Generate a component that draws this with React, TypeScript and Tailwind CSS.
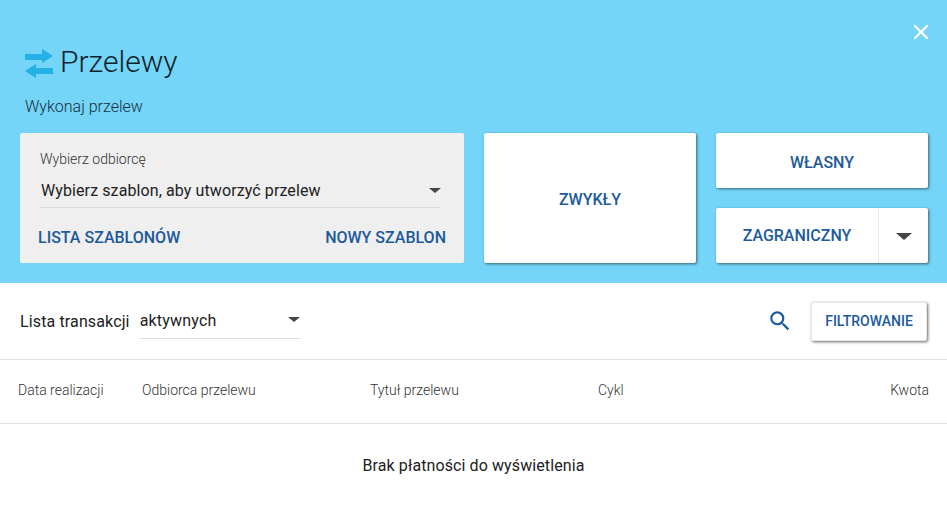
import { X } from "lucide-react";

function Caret({ className }: { className: string }) {
  return <span className={`border-x-transparent border-t-[#444] ${className}`} />;
}

function ActionButton({ label, className }: { label: string; className: string }) {
  return (
    <button
      type="button"
      className={`flex items-center justify-center rounded-[2px] bg-white text-base font-medium text-[#1c5a9c] shadow-[1px_1px_3px_rgba(0,0,0,0.55)] ${className}`}
    >
      {label}
    </button>
  );
}

export default function App() {
  return (
    <div className="h-[506px] w-[947px] overflow-hidden bg-white font-['Roboto',sans-serif] text-[#212121]">
      <header className="relative h-[283px] bg-[#74d5f8] pt-[133px] pr-[19px] pl-5">
        <button type="button" className="absolute top-[20px] right-[14px] text-white">
          <X className="h-6 w-6" strokeWidth={2.2} />
        </button>

        <div className="absolute top-[41px] left-[25px]">
          <div className="flex h-[42px] items-center gap-[7px]">
            <svg width="28" height="30" viewBox="0 0 28 30" className="mt-[3px] text-[#23b1e6]" fill="currentColor">
              <path d="M0 5h17V0l11 7-11 7v-3H0z" />
              <path d="M28 19H11v-4L0 22l11 7v-4h17z" />
            </svg>
            <h1 className="text-[30px] leading-none font-light text-[#10222c]">Przelewy</h1>
          </div>
          <p className="mt-[14px] text-base leading-5 font-light text-[#14303d]">Wykonaj przelew</p>
        </div>

        <div className="flex gap-5">
          <section className="flex h-[130px] w-[444px] flex-col rounded-[2px] bg-[#efefef] px-[18px] pt-[17px]">
            <div className="pr-[6px] pl-[2px]">
              <label className="block text-sm leading-[18px] font-light text-[#333]">Wybierz odbiorcę</label>
              <div className="mt-[4px] flex h-[36px] items-center justify-between border-b border-[#dcdcdc] pt-[3px]">
                <span className="pl-px text-base tracking-[0.1px] text-[#212121]">
                  Wybierz szablon, aby utworzyć przelew
                </span>
                <Caret className="mr-[-1px] mb-[2px] border-x-[6px] border-t-[5px]" />
              </div>
            </div>
            <div className="mt-[20px] flex justify-between text-base leading-5 font-medium text-[#1c5a9c]">
              <a>LISTA SZABLONÓW</a>
              <a>NOWY SZABLON</a>
            </div>
          </section>

          <ActionButton label="ZWYKŁY" className="h-[130px] w-[212px] pt-[4px]" />

          <div className="flex w-[212px] flex-col gap-5">
            <ActionButton label="WŁASNY" className="h-[55px] w-full pt-[5px]" />
            <div className="flex h-[55px] w-full rounded-[2px] bg-white shadow-[1px_1px_3px_rgba(0,0,0,0.55)]">
              <button type="button" className="flex-1 border-r border-[#e8e8e8] text-base font-medium text-[#1c5a9c]">
                ZAGRANICZNY
              </button>
              <button type="button" className="flex w-[49px] items-center justify-center pt-px">
                <Caret className="border-x-[8px] border-t-[7px]" />
              </button>
            </div>
          </div>
        </div>
      </header>

      <div className="flex h-[77px] items-center justify-between border-b border-[#e0e0e0] px-5">
        <div className="flex items-center gap-[10px]">
          <span className="pt-[2px] text-base tracking-[0.13px] text-[#212121]">Lista transakcji</span>
          <div className="flex h-[35px] w-[160px] items-center justify-between border-b border-[#dcdcdc] pt-[2px] pb-px">
            <span className="text-base tracking-[0.2px] text-[#212121]">aktywnych</span>
            <Caret className="mb-[3px] border-x-[6px] border-t-[5px]" />
          </div>
        </div>
        <div className="flex items-center gap-[18px]">
          <svg width="26" height="26" viewBox="0 0 24 24" fill="currentColor" className="text-[#1c5a9c]">
            <path d="M15.5 14h-.79l-.28-.27A6.471 6.471 0 0 0 16 9.5 6.5 6.5 0 1 0 9.5 16c1.61 0 3.09-.59 4.23-1.57l.27.28v.79l5 4.99L20.49 19l-4.99-5zm-6 0C7.01 14 5 11.99 5 9.5S7.01 5 9.5 5 14 7.01 14 9.5 11.99 14 9.5 14z" />
          </svg>
          <button
            type="button"
            className="h-[39px] w-[116px] rounded-[2px] border border-[#e8e8e8] bg-white text-sm font-medium text-[#1c5a9c] shadow-[1px_1px_3px_rgba(0,0,0,0.6)]"
          >
            FILTROWANIE
          </button>
        </div>
      </div>

      <div className="flex h-[64px] items-center border-b border-[#e0e0e0] px-[18px] pb-[3px] text-sm font-light text-[#333]">
        <span className="w-[124px]">Data realizacji</span>
        <span className="w-[228px]">Odbiorca przelewu</span>
        <span className="w-[228px]">Tytuł przelewu</span>
        <span>Cykl</span>
        <span className="ml-auto">Kwota</span>
      </div>

      <p className="pt-[32px] text-center text-base leading-5 tracking-[0.1px] text-[#212121]">
        Brak płatności do wyświetlenia
      </p>
    </div>
  );
}
